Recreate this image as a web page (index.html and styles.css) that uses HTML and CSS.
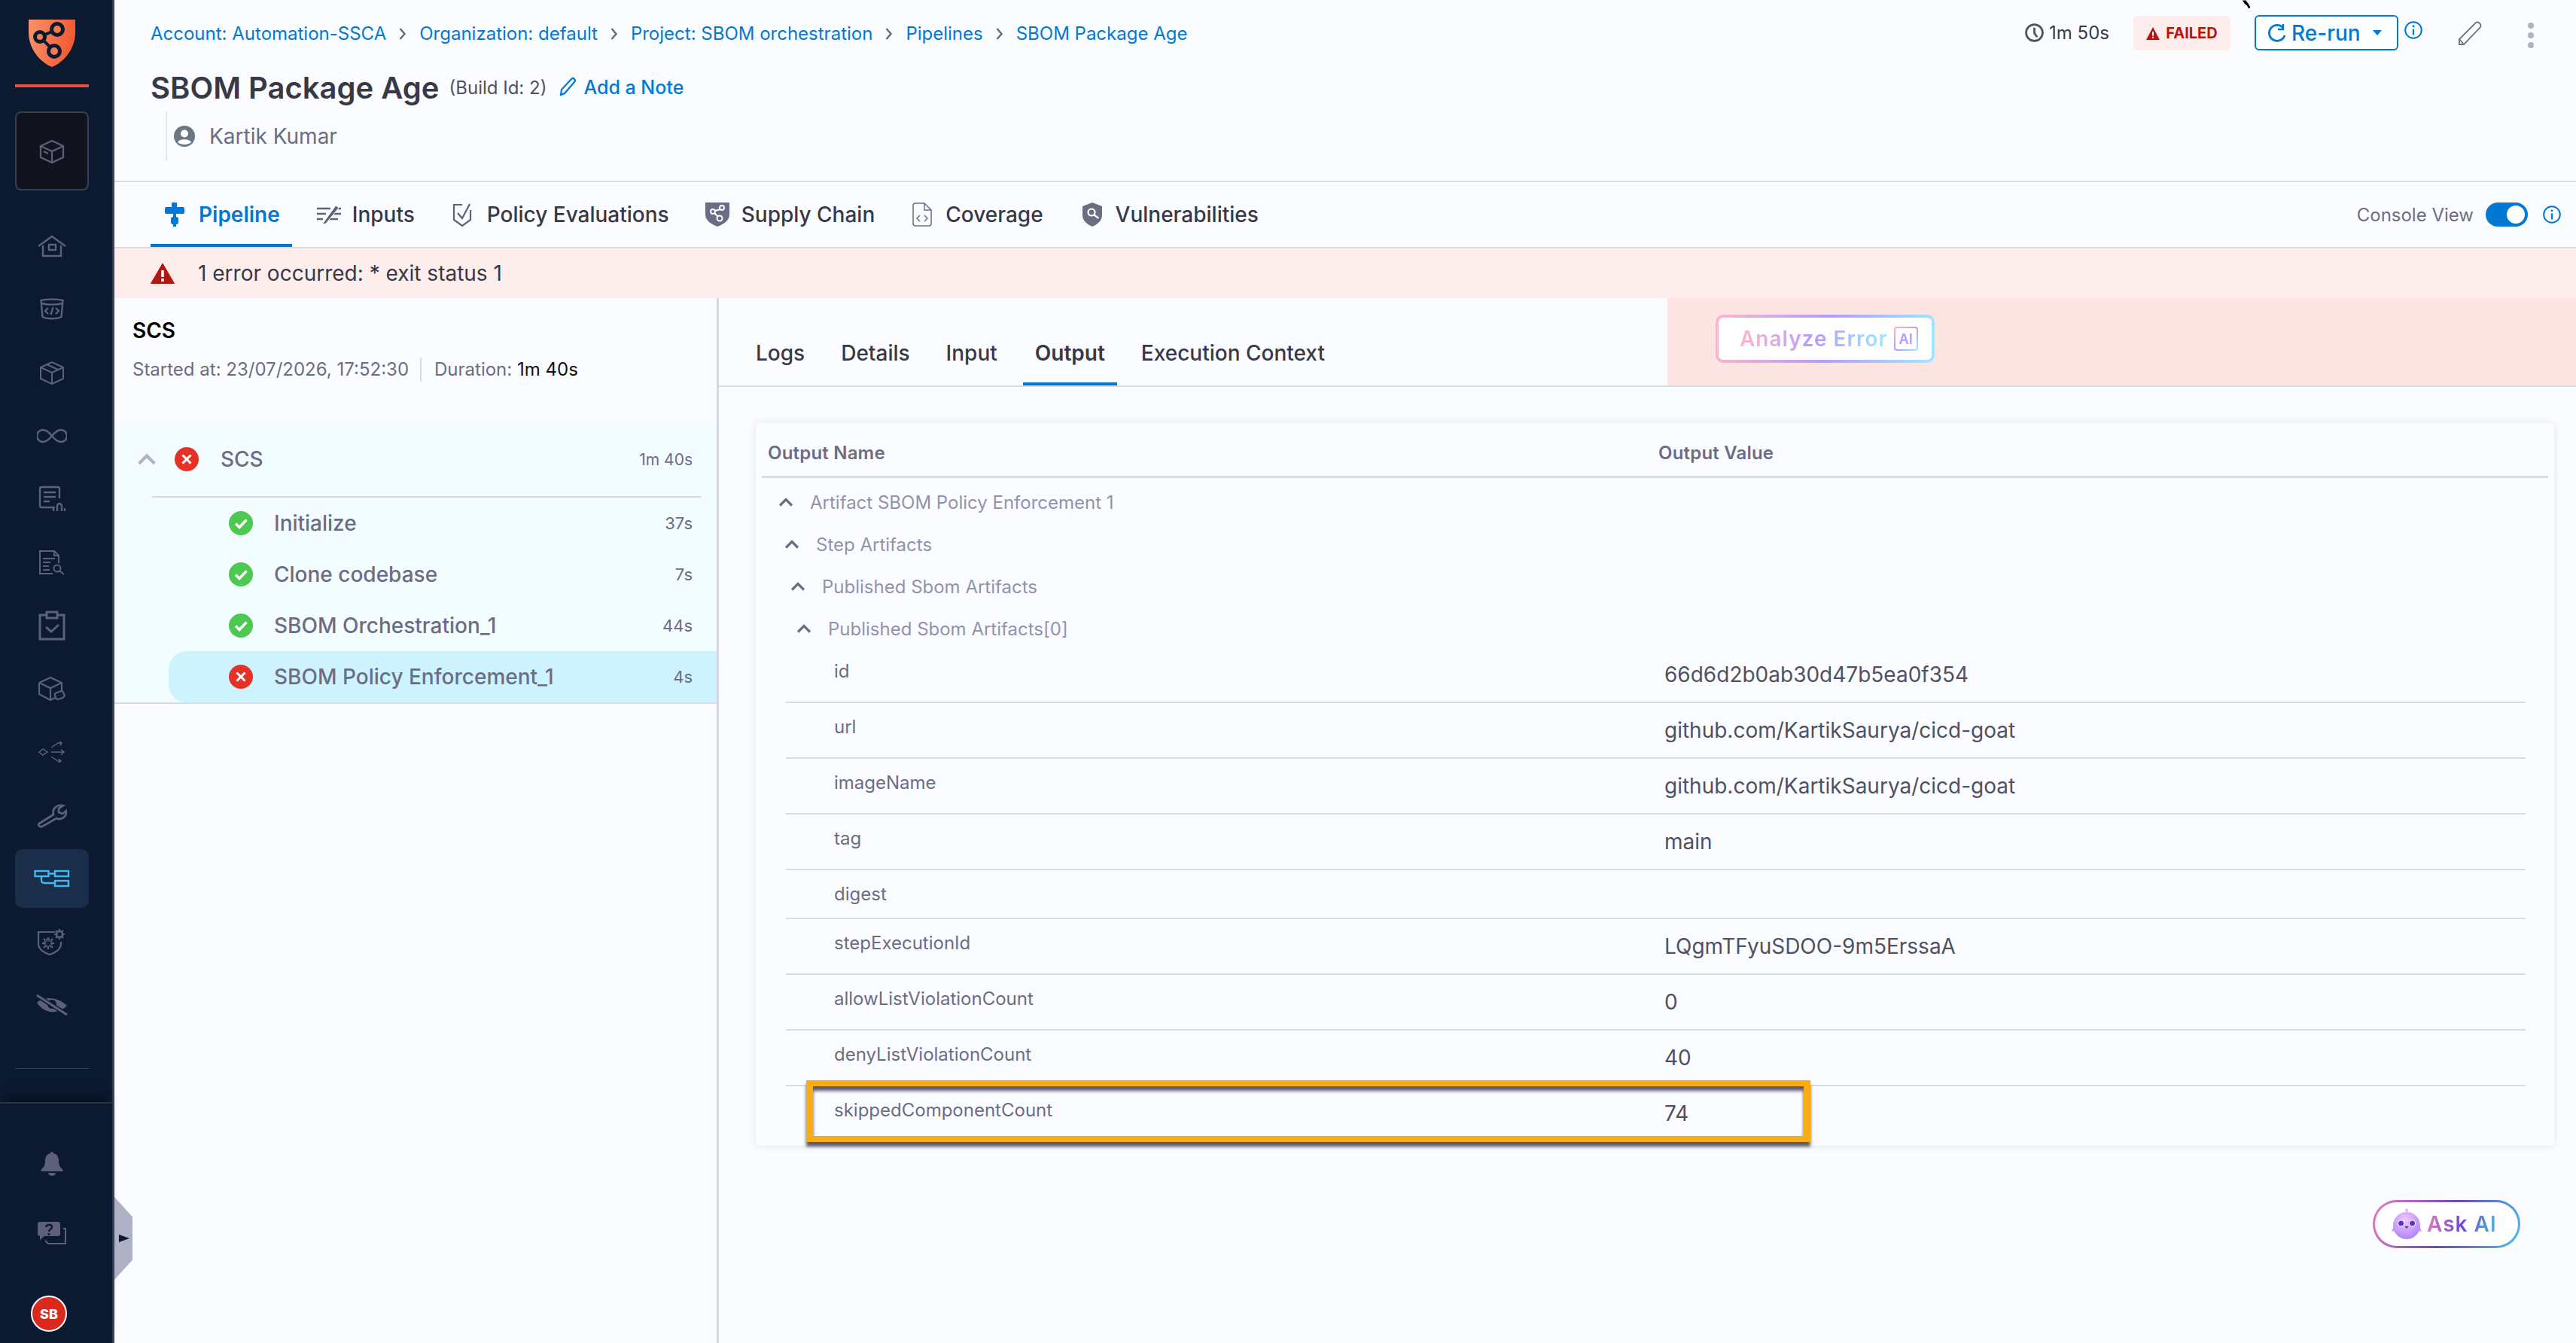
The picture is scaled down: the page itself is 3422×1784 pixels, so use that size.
FILE: index.html
```html
<!DOCTYPE html>
<html lang="en">
<head>
<meta charset="utf-8">
<title>SBOM Package Age</title>
<link rel="stylesheet" href="styles.css">
</head>
<body>
<svg class="defs" width="0" height="0" aria-hidden="true">
  <defs>
    <linearGradient id="logoGrad" x1="0" y1="0" x2="1" y2="0.2"><stop offset="0" stop-color="#F9936B"/><stop offset="1" stop-color="#F15A33"/></linearGradient>
    <radialGradient id="botGrad" cx="0.45" cy="0.3" r="0.8"><stop offset="0" stop-color="#F2C8FF"/><stop offset="1" stop-color="#A87BF5"/></radialGradient>
    <symbol id="ok" viewBox="0 0 32 32"><circle cx="16" cy="16" r="16" fill="#4DC952"/><path d="M9 16.500l5 5 9.500-10" fill="none" stroke="#fff" stroke-width="3.400"/></symbol>
    <symbol id="bad" viewBox="0 0 32 32"><circle cx="16" cy="16" r="16" fill="#E43326"/><path d="M10.500 10.500l11 11M21.500 10.500l-11 11" fill="none" stroke="#fff" stroke-width="3"/></symbol>
    <symbol id="up" viewBox="0 0 20 14"><path d="M2 11.500l8-8 8 8" fill="none" stroke="currentColor" stroke-width="3.200"/></symbol>
    <symbol id="info" viewBox="0 0 24 24"><circle cx="12" cy="12" r="10.800" fill="none" stroke="#0278D5" stroke-width="2"/><circle cx="12" cy="6.800" r="1.500" fill="#0278D5"/><path d="M12 10.500v8" stroke="#0278D5" stroke-width="2.200"/></symbol>
    <symbol id="next" viewBox="0 0 12 20"><path d="M2.500 3l6 7-6 7" fill="none" stroke="#5F6B7A" stroke-width="2.400"/></symbol>
  </defs>
</svg>

<div class="app">
  <aside class="side">
    <div class="logo-wrap">
      <svg class="logo" viewBox="0 0 62 63" width="62" height="63">
        <path d="M0 0H62V17C62 38 48 56 31 63C14 56 0 38 0 17Z" fill="url(#logoGrad)"/>
        <path d="M38 13L15 23L34 42" fill="none" stroke="#0B1A31" stroke-width="4"/>
        <circle cx="38" cy="13" r="7.500" fill="#F47A50" stroke="#0B1A31" stroke-width="5"/>
        <circle cx="15" cy="23" r="6.500" fill="#F47A50" stroke="#0B1A31" stroke-width="5"/>
        <circle cx="34" cy="42" r="7.500" fill="#F47A50" stroke="#0B1A31" stroke-width="5"/>
      </svg>
      <div class="logo-rule"></div>
    </div>
    <div class="module-box">
      <svg viewBox="0 0 34 34" width="34" height="34" fill="none" stroke="#5D6079" stroke-width="2.200"><path d="M2 10L17 3l15 7v15l-15 7-15-7zM2 10l15 7 15-7M17 17v15M6 17l6 3"/></svg>
    </div>
    <nav class="side-nav">
      <div class="nav-item"><svg viewBox="0 0 38 32" width="38" height="32" fill="none" stroke="#5D6079" stroke-width="2.400"><path d="M1 16L19 3l18 13M7 15v14h24V15"/><rect x="15" y="14" width="9" height="7"/></svg></div>
      <div class="nav-item"><svg viewBox="0 0 32 30" width="32" height="30" fill="none" stroke="#5D6079" stroke-width="2.400"><path d="M1.500 3c8-2 21-2 29 0l-2 22c-6 3-19 3-25 0z"/><path d="M1.500 7c9 2 20 2 29 0M11 13l-4 4 4 4M21 13l4 4-4 4M17.500 12l-3 10"/></svg></div>
      <div class="nav-item"><svg viewBox="0 0 32 32" width="32" height="32" fill="none" stroke="#5D6079" stroke-width="2"><path d="M1 9L16 2l15 7v15l-15 7-15-7zM1 9l15 7 15-7M16 16v15M9 5l15 7"/></svg></div>
      <div class="nav-item"><svg viewBox="0 0 40 20" width="40" height="20" fill="none" stroke="#5D6079" stroke-width="2.600"><path d="M20 10c-4-5-8-8-12-8a8 8 0 0 0 0 16c4 0 8-3 12-8c4-5 8-8 12-8a8 8 0 0 1 0 16c-4 0-8-3-12-8z"/></svg></div>
      <div class="nav-item"><svg viewBox="0 0 36 36" width="36" height="36" fill="none" stroke="#5D6079" stroke-width="2.400"><path d="M22 29H4q-2 0-2-2V4q0-2 2-2h22q2 0 2 2v13M7 9h16M7 15h16M7 21h8"/><path d="M20 34v-5M25 34v-7a3 3 0 0 1 6 0v7M35 34v-4"/></svg></div>
      <div class="nav-item"><svg viewBox="0 0 34 34" width="34" height="34" fill="none" stroke="#5D6079" stroke-width="2"><path d="M26 18V8l-6-6H1v30h17M20 2v6h6M5 12h16M5 17h10M5 22h8M5 27h9"/><circle cx="24" cy="25" r="4.500"/><path d="M27.500 28.500L33 33"/></svg></div>
      <div class="nav-item"><svg viewBox="0 0 36 40" width="36" height="40" fill="none" stroke="#5D6079" stroke-width="3"><path d="M11 6H2v32h32V6h-9"/><rect x="11" y="2" width="14" height="8"/><path d="M10 22l7 6 10-9"/></svg></div>
      <div class="nav-item"><svg viewBox="0 0 36 34" width="36" height="34" fill="none" stroke="#5D6079" stroke-width="2.200"><path d="M1 9L16 2l15 7v10M1 9v15l15 8 6-3M1 9l15 7 15-7M16 16v16"/><rect x="22" y="21" width="12" height="9" rx="3" transform="rotate(-20 28 25)"/></svg></div>
      <div class="nav-item"><svg viewBox="0 0 36 30" width="36" height="30" fill="none" stroke="#5D6079" stroke-width="1.500"><path d="M1 15l5-4 6 4-6 4zM17 15h17M30 11.500l4 3.500-4 3.500M17 9l9-6h5M28 1l3 2-2 3M17 21l9 6h4M27 24l3 3-3 2"/></svg></div>
      <div class="nav-item"><svg viewBox="0 0 40 34" width="40" height="34" fill="none" stroke="#5D6079" stroke-width="2.800"><path d="M3 28l19-12c-2-8 5-14 13-12l-6 4v5l5 2 5-4c1 8-7 13-13 10L7 32c-3 1-6-2-4-4z"/></svg></div>
      <div class="nav-item nav-active"><svg viewBox="0 0 48 24" width="48" height="24" fill="none" stroke="#3FB7F3" stroke-width="2.400"><rect x="1.500" y="2" width="18" height="7"/><rect x="28" y="2" width="18" height="7"/><rect x="28" y="15" width="18" height="7"/><path d="M19.500 5.500H28M10 9v5q0 4 4 4h14"/></svg></div>
      <div class="nav-item"><svg viewBox="0 0 40 36" width="40" height="36" fill="none" stroke="#5D6079" stroke-width="2.200"><path d="M24 5H2v16c0 7 8 12 15 14c7-2 15-7 15-14v-3"/><circle cx="15" cy="20" r="4.500" stroke-width="3" stroke-dasharray="2 1"/><path d="M15 12v3M15 25v3M7 20h3M20 20h3M9 14l2 2M19 24l2 2M21 14l-2 2M11 24l-2 2"/><circle cx="30" cy="8" r="4" stroke-width="2.500"/><path d="M30 1v3M30 12v3M23 8h3M34 8h3M25 3l2 2M33 11l2 2M35 3l-2 2M27 11l-2 2"/></svg></div>
      <div class="nav-item"><svg viewBox="0 0 42 30" width="42" height="30"><path d="M1 12C8 5 26 2 41 16C30 27 12 28 1 12Z" fill="#5D6079"/><circle cx="21" cy="14" r="6" fill="#0B1A31"/><path d="M2 3l38 24" stroke="#0B1A31" stroke-width="6"/><path d="M1 2l40 26" stroke="#5D6079" stroke-width="3"/></svg></div>
    </nav>
    <div class="side-rule"></div>
    <div class="side-bottom">
      <div class="bottom-item"><svg viewBox="0 0 30 32" width="30" height="32" fill="#5D6079"><path d="M15 0c2 0 2 2 2 2c5 1 7 5 7 10c0 6 2 9 5 11c1 1 1 3-1 3H2c-2 0-2-2-1-3c3-2 5-5 5-11c0-5 2-9 7-10c0 0 0-2 2-2zM10 28h10c-1 3-3 4-5 4s-4-1-5-4z"/></svg></div>
      <div class="bottom-item"><svg viewBox="0 0 38 32" width="38" height="32"><path d="M3 1h24q3 0 3 3v13q0 3-3 3H9l-6 5v-5q-3 0-3-3V4q0-3 3-3z" fill="#5D6079"/><path d="M34 10h3v20H14l-4-4" fill="none" stroke="#5D6079" stroke-width="2.200"/><path d="M11 8c1-4 8-4 8 0c0 3-4 3-4 6" fill="none" stroke="#0B1A31" stroke-width="2.500"/><circle cx="15" cy="17.500" r="1.600" fill="#0B1A31"/></svg></div>
      <div class="avatar">SB</div>
    </div>
  </aside>

  <div class="handle"><span class="handle-arrow"></span></div>

  <main class="main">
    <header class="head">
      <div class="head-left">
        <div class="crumbs">
          <a class="crumb">Account: Automation-SSCA</a><svg class="sep"><use href="#next"/></svg>
          <a class="crumb">Organization: default</a><svg class="sep"><use href="#next"/></svg>
          <a class="crumb">Project: SBOM orchestration</a><svg class="sep"><use href="#next"/></svg>
          <a class="crumb">Pipelines</a><svg class="sep"><use href="#next"/></svg>
          <a class="crumb">SBOM Package Age</a>
        </div>
        <div class="title-row">
          <h1 class="title">SBOM Package Age</h1>
          <span class="build">(Build Id: 2)</span>
          <svg class="note-icon" viewBox="0 0 24 26" width="24" height="26" fill="none" stroke="#0278D5" stroke-width="2.200"><path d="M2 24l1-7L16 3q2-2 4 0t0 4L7 22z"/></svg>
          <a class="note">Add a Note</a>
        </div>
        <div class="user-row">
          <svg viewBox="0 0 28 28" width="28" height="28"><circle cx="14" cy="14" r="14" fill="#6B7785"/><circle cx="14" cy="10.500" r="5" fill="#fff"/><path d="M5 22c2-5 16-5 18 0c-4 4-14 4-18 0z" fill="#fff"/></svg>
          <span class="user-name">Kartik Kumar</span>
        </div>
      </div>
      <div class="head-right">
        <svg class="clock" viewBox="0 0 24 24" width="25" height="25" fill="none" stroke="#4F5162" stroke-width="2.600"><circle cx="12" cy="12" r="10.500"/><path d="M12 5.500v7l3.500 5"/></svg>
        <span class="dur">1m 50s</span>
        <span class="failed"><svg viewBox="0 0 18 17" width="18" height="17"><path d="M9 0l9 17H0z" fill="#B41710"/><path d="M9 6v5.500M9 12.800v2" stroke="#fff" stroke-width="2"/></svg>FAILED</span>
        <button class="rerun">
          <svg viewBox="0 0 24 26" width="24" height="26" fill="none" stroke="#0278D5" stroke-width="2.800"><path d="M20 6A10.500 10.500 0 1 0 22 16"/><path d="M20 1v7h-7" stroke-width="2.400"/></svg>
          <span>Re-run</span>
          <span class="caret"></span>
        </button>
        <svg class="info-top"><use href="#info"/></svg>
        <svg class="pencil" viewBox="0 0 32 32" width="32" height="32" fill="none" stroke="#6B6D85" stroke-width="1.800"><path d="M2 31V24L24 2q2-1 4 0l2 2q1 2 0 4L8 31z"/><path d="M2 24l6 7"/></svg>
        <span class="kebab"><i></i><i></i><i></i></span>
      </div>
    </header>

    <nav class="tabs">
      <a class="tab tab-on"><svg viewBox="0 0 26 32" width="26" height="32" fill="#0278D5"><rect x="0" y="6" width="26" height="9" rx="2"/><rect x="9" y="0" width="7" height="6" rx="1"/><rect x="8" y="19" width="10" height="10" rx="3"/><rect x="11" y="14" width="4" height="18"/></svg>Pipeline</a>
      <a class="tab tab-inputs"><svg viewBox="0 0 34 30" width="34" height="30" fill="none" stroke="#5F6079" stroke-width="2.400"><path d="M1 7h18M1 14h12M1 21h8M26 7h7M22 14h11M17 21h12"/><path d="M8 28L26 3l4 3-17 21z" fill="#5F6079" stroke="#FBFCFF" stroke-width="1"/></svg>Inputs</a>
      <a class="tab tab-policy"><svg viewBox="0 0 26 32" width="26" height="32" fill="none" stroke="#5F6079" stroke-width="2.200"><path d="M13 3H2v20l11 8 11-8V10"/><path d="M7 14l6 7L23 2"/></svg>Policy Evaluations</a>
      <a class="tab tab-supply"><svg viewBox="0 0 32 32" width="32" height="32"><path d="M0 0h32v16c0 8-8 13-16 16C8 29 0 24 0 16z" fill="#6B6D85"/><g fill="none" stroke="#FBFCFF" stroke-width="2"><circle cx="22" cy="7" r="3"/><circle cx="10" cy="12" r="3"/><circle cx="19" cy="21" r="3.500"/><path d="M20 9l-7 2M12 14l5 5"/></g></svg>Supply Chain</a>
      <a class="tab tab-coverage"><svg viewBox="0 0 26 32" width="26" height="32" fill="none" stroke="#6B6D85" stroke-width="1.500"><path d="M16 1H4q-3 0-3 3v24q0 3 3 3h18q3 0 3-3V10zM16 1v9h9"/><path d="M10 17l-4 4 4 4M16 17l4 4-4 4"/></svg>Coverage</a>
      <a class="tab tab-vuln"><svg viewBox="0 0 26 32" width="26" height="32"><path d="M13 0l13 5v12c0 7-6 12-13 15C6 29 0 24 0 17V5z" fill="#6B6D85"/><circle cx="12" cy="13" r="4.500" fill="none" stroke="#fff" stroke-width="2.200"/><path d="M15.500 16.500l6 4.500" stroke="#fff" stroke-width="2.200"/></svg>Vulnerabilities</a>
      <div class="console">
        <span class="console-label">Console View</span>
        <span class="toggle"><i></i></span>
        <svg class="info-console"><use href="#info"/></svg>
      </div>
    </nav>

    <div class="error-bar">
      <svg viewBox="0 0 32 28" width="32" height="28"><path d="M16 1l15.500 26.500H.5z" fill="#B41710" stroke="#B41710" stroke-linejoin="round"/><path d="M16 10v9M16 21v4" stroke="#fff" stroke-width="3.500"/></svg>
      <span>1 error occurred: * exit status 1</span>
    </div>

    <div class="body">
      <section class="left">
        <div class="stage-head">
          <div class="stage-name">SCS</div>
          <div class="stage-meta"><span class="started">Started at: 23/07/2026, 17:52:30</span><span class="dur-label">Duration: <b>1m 40s</b></span></div>
        </div>
        <div class="steps">
          <div class="group-row">
            <svg class="group-chev"><use href="#up"/></svg>
            <svg class="st group-st"><use href="#bad"/></svg>
            <span class="step-name">SCS</span>
            <span class="step-time">1m 40s</span>
          </div>
          <div class="step"><svg class="st"><use href="#ok"/></svg><span class="step-name">Initialize</span><span class="step-time">37s</span></div>
          <div class="step"><svg class="st"><use href="#ok"/></svg><span class="step-name">Clone codebase</span><span class="step-time">7s</span></div>
          <div class="step"><svg class="st"><use href="#ok"/></svg><span class="step-name">SBOM Orchestration_1</span><span class="step-time">44s</span></div>
          <div class="step step-on"><svg class="st"><use href="#bad"/></svg><span class="step-name">SBOM Policy Enforcement_1</span><span class="step-time">4s</span></div>
        </div>
      </section>

      <section class="right">
        <div class="rtabs-bar">
          <div class="rtabs">
            <a class="rtab">Logs</a>
            <a class="rtab">Details</a>
            <a class="rtab">Input</a>
            <a class="rtab rtab-on">Output</a>
            <a class="rtab rtab-ctx">Execution Context</a>
          </div>
          <div class="analyze-zone">
            <button class="analyze"><span class="analyze-text">Analyze Error</span><span class="ai-chip">AI</span></button>
          </div>
        </div>

        <div class="card">
          <div class="thead"><span>Output Name</span><span>Output Value</span></div>
          <div class="tree">
            <div class="tree-row lv0"><svg class="chev"><use href="#up"/></svg>Artifact SBOM Policy Enforcement 1</div>
            <div class="tree-row lv1"><svg class="chev"><use href="#up"/></svg>Step Artifacts</div>
            <div class="tree-row lv2"><svg class="chev"><use href="#up"/></svg>Published Sbom Artifacts</div>
            <div class="tree-row lv3"><svg class="chev"><use href="#up"/></svg>Published Sbom Artifacts[0]</div>
          </div>
          <div class="kv"><span class="k">id</span><span class="v">66d6d2b0ab30d47b5ea0f354</span></div>
          <div class="kv"><span class="k">url</span><span class="v">github.com/KartikSaurya/cicd-goat</span></div>
          <div class="kv"><span class="k">imageName</span><span class="v">github.com/KartikSaurya/cicd-goat</span></div>
          <div class="kv"><span class="k">tag</span><span class="v">main</span></div>
          <div class="kv"><span class="k">digest</span><span class="v"></span></div>
          <div class="kv"><span class="k">stepExecutionId</span><span class="v">LQgmTFyuSDOO-9m5ErssaA</span></div>
          <div class="kv"><span class="k">allowListViolationCount</span><span class="v">0</span></div>
          <div class="kv"><span class="k">denyListViolationCount</span><span class="v">40</span></div>
          <div class="kv kv-last"><span class="k">skippedComponentCount</span><span class="v">74</span></div>
        </div>

        <button class="ask">
          <svg viewBox="0 0 40 42" width="40" height="42"><path d="M20 7V2" stroke="#E3B0FB" stroke-width="2"/><circle cx="20" cy="2.500" r="2" fill="#E3B0FB"/><path d="M4 20L0 31l6-1zM36 20l4 11-6-1z" fill="#C9A2FA"/><circle cx="20" cy="23" r="18" fill="url(#botGrad)"/><circle cx="12.500" cy="20" r="4.500" fill="#fff"/><circle cx="12.500" cy="20" r="3.500" fill="#5A35C4"/><circle cx="27.500" cy="20" r="4.500" fill="#fff"/><circle cx="27.500" cy="20" r="3.500" fill="#5A35C4"/><path d="M17.500 24h5l-2.500 3z" fill="#4A2AA8"/></svg>
          <span class="ask-text">Ask AI</span>
        </button>
      </section>
    </div>
  </main>

  <div class="highlight"></div>
  <svg class="cursor" viewBox="0 0 18 12" width="18" height="12"><path d="M1 0h6l1 2 3 4 2 4-3 2-3-5-2-1z" fill="#000" stroke="#fff" stroke-width="1"/></svg>
</div>
</body>
</html>
```
FILE: styles.css
```css
* { box-sizing: border-box; }
html, body { margin: 0; padding: 0; }
body { font-family: Inter, "Noto Sans", sans-serif; color: #383946; background: #FBFCFF; }
a { text-decoration: none; color: inherit; }
svg { display: block; flex: none; }
.defs { position: absolute; }

.app { position: relative; display: flex; width: 3422px; height: 1784px; overflow: hidden; background: #FBFCFF; }

/* Sidebar */
.side { width: 152px; flex: none; height: 100%; background: #0B1A31; border-right: 3px solid #3C4154; display: flex; flex-direction: column; align-items: flex-start; }
.logo-wrap { width: 98px; margin-left: 20px; padding-top: 26px; display: flex; flex-direction: column; align-items: center; }
.logo-rule { width: 98px; height: 4px; background: #E9503B; margin-top: 23px; }
.module-box { width: 98px; height: 105px; margin: 32px 0 0 20px; border-radius: 8px; background: #11141F; border: 2px solid #3A3D4F; display: flex; align-items: center; justify-content: center; }
.side-nav { margin: 32px 0 0 20px; width: 98px; display: flex; flex-direction: column; }
.nav-item { height: 84px; display: flex; align-items: center; justify-content: center; border-radius: 10px; }
.nav-active { background: #1A2D49; height: 78px; margin: 3px 0; }
.side-rule { width: 98px; height: 1px; background: #3A4256; margin: 42px 0 0 20px; }
.side-bottom { margin-top: 44px; width: 100%; border-top: 2px solid #2D3040; box-shadow: 0 -14px 14px -8px rgba(0,0,0,.5); flex: 1; display: flex; flex-direction: column; align-items: flex-start; padding-top: 38px; }
.bottom-item { height: 92px; display: flex; align-items: flex-start; justify-content: center; width: 138px; padding-top: 26px; }
.avatar { width: 48px; height: 48px; border-radius: 50%; background: #DA291D; border: 2px solid #fff; color: #fff; font-size: 18px; font-weight: 800; display: flex; align-items: center; justify-content: center; margin: 33px 0 0 41px; }

.handle { position: absolute; left: 152px; top: 1590px; width: 24px; height: 110px; background: #AEB0C6; clip-path: polygon(0 0, 100% 24%, 100% 76%, 0 100%); display: flex; align-items: center; }
.handle-arrow { width: 0; height: 0; margin-left: 6px; border-left: 14px solid #0B1A31; border-top: 5px solid transparent; border-bottom: 5px solid transparent; }

.main { flex: 1; min-width: 0; display: flex; flex-direction: column; height: 100%; }

/* Header */
.head { height: 242px; flex: none; border-bottom: 2px solid #DADBE5; display: flex; justify-content: space-between; padding-left: 48px; }
.crumbs { display: flex; align-items: center; padding-top: 29px; height: 61px; font-size: 24px; line-height: 32px; color: #0278D5; }
.sep { width: 12px; height: 20px; margin: 0 16px 0 16px; }
.title-row { display: flex; align-items: center; margin-top: 32px; height: 48px; }
.title { margin: 0; font-size: 40px; line-height: 48px; font-weight: 600; color: #383946; }
.build { font-size: 24px; color: #4F5162; margin-left: 13px; margin-top: -2px; }
.note-icon { margin-left: 17px; margin-top: -4px; }
.note { font-size: 25px; font-weight: 500; color: #0278D5; margin-left: 8px; margin-top: -2px; }
.user-row { margin: 7px 0 0 20px; height: 65px; border-left: 2px solid #E6E7EF; padding-left: 9px; display: flex; align-items: center; }
.user-name { font-size: 28px; color: #6B6D85; margin-left: 19px; }
.head-right { display: flex; align-items: flex-start; padding-top: 20px; height: 70px; }
.clock { margin-top: 11px; }
.dur { font-size: 24px; line-height: 48px; margin-left: 7px; color: #383946; }
.failed { margin-left: 32px; height: 46px; width: 129px; border-radius: 6px; background: #FDEDEC; color: #B41710; font-size: 20px; font-weight: 700; display: flex; align-items: center; justify-content: center; gap: 8px; margin-top: 1px; }
.rerun { margin-left: 32px; width: 191px; height: 47px; border: 2px solid #0278D5; border-radius: 6px; background: #FDFEFF; color: #0278D5; font: 500 28px Inter, sans-serif; display: flex; align-items: center; padding: 0 0 0 16px; }
.rerun span:first-of-type { margin-left: 7px; }
.caret { margin-left: 16px; width: 0; height: 0; border-top: 7px solid #0278D5; border-left: 6px solid transparent; border-right: 6px solid transparent; }
.info-top { width: 24px; height: 24px; margin: 8px 0 0 8px; }
.pencil { margin: 8px 0 0 47px; }
.kebab { margin: 10px 0 0 61px; width: 64px; display: flex; flex-direction: column; align-items: flex-start; gap: 5px; }
.kebab i { width: 8px; height: 8px; border-radius: 50%; background: #B0B1C3; }

/* Tabs */
.tabs { height: 88px; flex: none; display: flex; align-items: stretch; gap: 16px; padding-left: 48px; border-bottom: 2px solid #DADBE5; }
.tab { display: flex; align-items: center; gap: 18px; padding: 4px 16px 0; font-size: 28px; font-weight: 500; color: #383946; border-bottom: 4px solid transparent; }
.tab-on { color: #0278D5; font-weight: 600; border-bottom-color: #0278D5; border-radius: 3px 3px 0 0; padding-left: 19px; gap: 19px; }
.tab-inputs { gap: 14px; }
.tab-policy { margin-left: 2px; gap: 20px; }
.tab-supply { gap: 16px; }
.tab-coverage { margin-left: 2px; }
.tab-vuln { margin-left: 4px; }
.console { margin-left: auto; display: flex; align-items: center; padding-right: 20px; }
.console-label { font-size: 24px; color: #6B6D85; }
.toggle { width: 56px; height: 32px; margin-left: 16px; border-radius: 16px; background: #0278D5; display: flex; justify-content: flex-end; align-items: center; padding-right: 4px; }
.toggle i { width: 24px; height: 24px; border-radius: 50%; background: #fff; }
.info-console { width: 24px; height: 24px; margin-left: 20px; }

/* Error */
.error-bar { height: 66px; flex: none; background: #FDEDEC; display: flex; align-items: center; padding-left: 48px; font-size: 28px; color: #383946; gap: 31px; }

.body { flex: 1; min-height: 0; display: flex; }

/* Left panel */
.left { width: 803px; flex: none; border-right: 3px solid #D3D5E0; }
.stage-head { height: 165px; padding: 26px 0 0 24px; }
.stage-name { font-size: 28px; line-height: 34px; font-weight: 600; color: #000; }
.stage-meta { display: flex; align-items: center; margin-top: 19px; font-size: 24px; line-height: 32px; color: #6B6D85; }
.started { padding-right: 15px; border-right: 2px solid #D9DAE5; }
.dur-label { padding-left: 17px; }
.dur-label b { font-weight: 400; color: #111; }
.steps { background: #F3FCFF; border-bottom: 2px solid #DADBE5; height: 374px; }
.group-row { position: relative; height: 100px; display: flex; align-items: center; padding: 0 32px 2px 30px; }
.group-row::after { content: ""; position: absolute; left: 50px; right: 20px; bottom: 0; height: 2px; background: #D3D8E2; }
.group-chev { width: 26px; height: 18px; color: #B0B1C3; }
.group-st { margin-left: 24px; }
.group-row .step-name { margin-left: 29px; }
.group-row .step-time { font-size: 21px; }
.st { width: 32px; height: 32px; }
.step { height: 68px; display: flex; align-items: center; margin-left: 72px; padding: 0 32px 0 80px; border-radius: 24px 0 0 24px; }
.step-on { background: #CDF4FE; }
.step-name { font-size: 28px; font-weight: 500; color: #6B6D85; margin-left: 28px; }
.step-time { margin-left: auto; font-size: 22px; color: #6B6D85; }

/* Right panel */
.right { position: relative; flex: 1; min-width: 0; }
.rtabs-bar { height: 118px; display: flex; border-bottom: 2px solid #DADBE5; }
.rtabs { width: 1260px; flex: none; display: flex; align-items: flex-end; gap: 16px; padding-left: 33px; }
.rtab { padding: 22px 16px 24px; font-size: 28px; line-height: 34px; color: #383946; font-weight: 500; border-bottom: 2px solid transparent; }
.rtab-on { font-weight: 600; border-bottom: 4px solid #0278D5; padding-bottom: 22px; border-radius: 3px 3px 0 0; margin-left: 2px; }
.rtab-ctx { margin-left: 0; }
.analyze-zone { flex: 1; background: #FBE4E2; padding: 22px 0 0 64px; }
.analyze { width: 291px; height: 64px; border: 4px solid transparent; border-radius: 10px; background: linear-gradient(#fff, #fff) padding-box, linear-gradient(100deg, #FFB6C8 0%, #B59BFF 50%, #9BEBFF 100%) border-box; font: 600 28px Inter, sans-serif; letter-spacing: 1px; display: flex; align-items: center; padding: 0 0 0 28px; }
.analyze-text { background: linear-gradient(90deg, #FFB6C8 0%, #B59BFF 50%, #9BEBFF 100%); -webkit-background-clip: text; background-clip: text; color: transparent; white-space: nowrap; }
.ai-chip { width: 32px; height: 32px; margin-left: 8px; border: 2px solid transparent; border-radius: 4px; background: linear-gradient(#fff, #fff) padding-box, linear-gradient(135deg, #FFB6C8, #B59BFF 50%, #9BEBFF) border-box; font-size: 18px; letter-spacing: 0; font-weight: 600; color: #B59BFF; display: flex; align-items: center; justify-content: center; }

.card { margin: 48px 29px 0 49px; height: 960px; background: #FBFCFF; box-shadow: 0 0 10px rgba(96,97,112,.16); border-radius: 4px; }
.thead { height: 73px; margin: 0 8px; border-bottom: 3px solid #DADBE5; display: grid; grid-template-columns: 1183px 1fr; align-items: center; padding: 8px 0 0 8px; font-size: 24px; font-weight: 600; letter-spacing: .2px; color: #6B6D85; }
.tree { margin-top: 3px; margin-bottom: -2px; }
.tree-row { height: 56px; padding-top: 2px; display: flex; align-items: center; gap: 22px; font-size: 24px; color: #9293AB; }
.chev { width: 20px; height: 14px; color: #6B6D85; }
.lv0 { padding-left: 30px; }
.lv1 { padding-left: 38px; }
.lv2 { padding-left: 46px; }
.lv3 { padding-left: 54px; }
.kv { margin: 0 38px 0 40px; display: grid; grid-template-columns: 1167px 1fr; align-items: start; border-bottom: 2px solid #DADBE5; }
.kv-last { border-bottom: 0; }
.k { padding: 17px 0 16px 64px; font-size: 24px; line-height: 30px; color: #6B6D85; }
.v { padding: 19px 0 18px; font-size: 28px; line-height: 35px; color: #4F5162; }

.ask { position: absolute; right: 74px; bottom: 126px; width: 196px; height: 64px; border: 3px solid transparent; border-radius: 32px; background: linear-gradient(#fff, #fff) padding-box, linear-gradient(115deg, #EC7DBB 0%, #6A45D6 50%, #45C4E4 100%) border-box; display: flex; align-items: center; padding: 0 0 0 22px; gap: 7px; font: 600 28px Inter, sans-serif; letter-spacing: 1px; }
.ask-text { background: linear-gradient(100deg, #E67BBD 0%, #6E48D8 50%, #45BFE0 100%); -webkit-background-clip: text; background-clip: text; color: transparent; white-space: nowrap; }

.highlight { position: absolute; left: 1071px; top: 1435px; width: 1334px; height: 82px; border-style: solid; border-color: #F9AC13; border-width: 8px 9px; box-shadow: 0 6px 4px rgba(25,27,45,.72), inset 0 6px 4px rgba(25,27,45,.72); }
.cursor { position: absolute; left: 2977px; top: 0; }
```
